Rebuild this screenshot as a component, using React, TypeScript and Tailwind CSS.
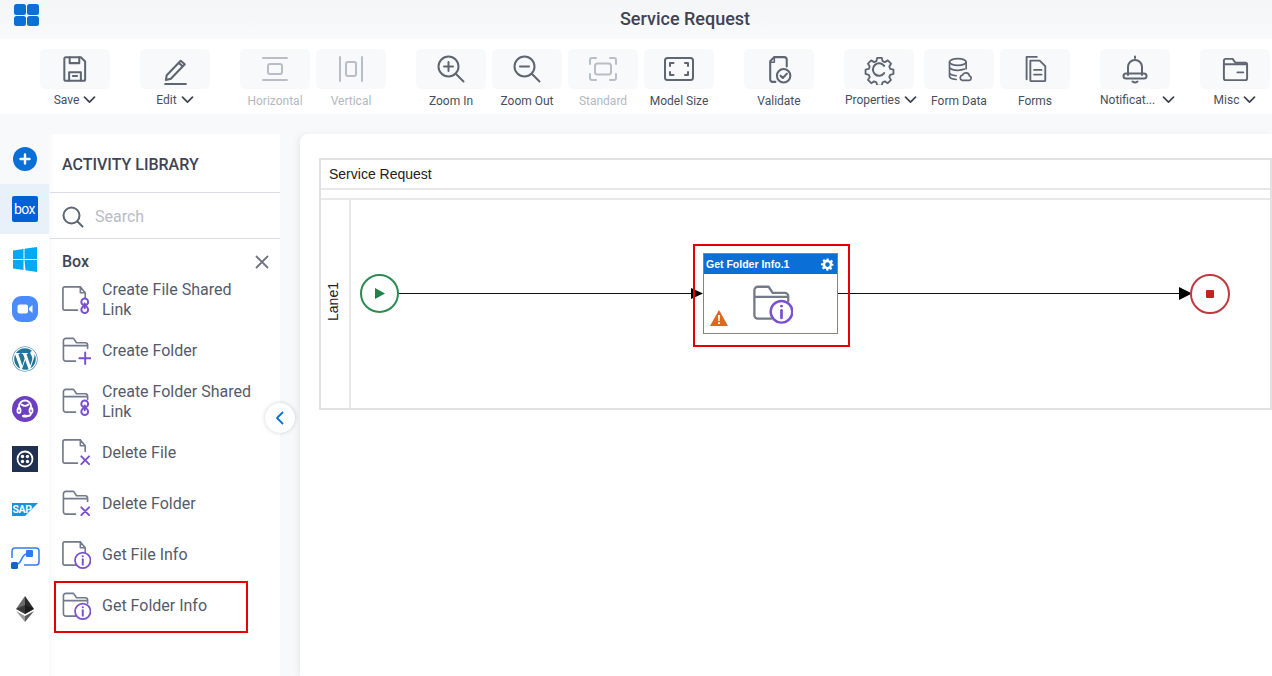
import { ReactNode } from "react";
import { FaWordpress } from "react-icons/fa";

const GREY = "#5f6673";
const SOFT = "#b9bdc6";
const PURPLE = "#7a4fd0";

function Ico({ children, size = 30, stroke = GREY, sw = 2 }: { children: ReactNode; size?: number; stroke?: string; sw?: number }) {
  return (
    <svg width={size} height={size} viewBox="0 0 30 30" fill="none" stroke={stroke} strokeWidth={sw} strokeLinecap="round" strokeLinejoin="round">
      {children}
    </svg>
  );
}

const Chevron = () => (
  <svg width="13" height="8" viewBox="0 0 13 8" fill="none" stroke="#3f4455" strokeWidth="1.700" strokeLinecap="round" strokeLinejoin="round" className="shrink-0">
    <path d="M1.500 1.200 6.500 6.200 11.500 1.200" />
  </svg>
);

const toolbarIcons: Record<string, ReactNode> = {
  save: (
    <Ico size={32} sw={1.900}>
      <path d="M6.500 4h14l4 4v16.500a1.500 1.500 0 0 1-1.500 1.500H6.500A1.500 1.500 0 0 1 5 24.500V5.500A1.500 1.500 0 0 1 6.500 4Z" />
      <path d="M10 4v5.500h9V4M9.500 26v-8h11v8M13 21.500h4" />
    </Ico>
  ),
  edit: (
    <Ico size={31}>
      <path d="M6.500 20.500 20 6.500l4 3.500-13.500 14-4.800 1.200ZM18 8.500l4 3.500" />
      <path d="M5 29h20" />
    </Ico>
  ),
  horizontal: (
    <Ico stroke={SOFT}>
      <path d="M3 4h24M3 26h24" />
      <rect x="8" y="10" width="14" height="10" rx="2" />
    </Ico>
  ),
  vertical: (
    <Ico stroke={SOFT}>
      <path d="M4 3v24M26 3v24" />
      <rect x="10" y="8" width="10" height="14" rx="2" />
    </Ico>
  ),
  zoomIn: (
    <Ico>
      <circle cx="12.500" cy="12.500" r="10" />
      <path d="m20 20 7.500 7.500M12.500 8v9M8 12.500h9" />
    </Ico>
  ),
  zoomOut: (
    <Ico>
      <circle cx="12.500" cy="12.500" r="10" />
      <path d="m20 20 7.500 7.500M8 12.500h9" />
    </Ico>
  ),
  standard: (
    <svg width="30" height="24" viewBox="0 0 30 24" fill="none" stroke={SOFT} strokeWidth="2" strokeLinecap="round" strokeLinejoin="round">
      <path d="M2 7V3a2 2 0 0 1 2-2h4M22 1h4a2 2 0 0 1 2 2v4M28 17v4a2 2 0 0 1-2 2h-4M8 23H4a2 2 0 0 1-2-2v-4" />
      <rect x="7" y="6.500" width="16" height="11" rx="2.500" />
    </svg>
  ),
  modelSize: (
    <svg width="30" height="24" viewBox="0 0 30 24" fill="none" stroke={GREY} strokeWidth="2" strokeLinecap="round" strokeLinejoin="round">
      <rect x="1" y="1" width="28" height="22" rx="2.500" />
      <path d="M6 9V6h3.500M21 6h3v3M24 15v3h-3M9.500 18H6v-3" />
    </svg>
  ),
  validate: (
    <Ico size={31}>
      <path d="M11 27H8.500A2.500 2.500 0 0 1 6 24.500V7l4-4h9.500A2.500 2.500 0 0 1 22 5.500V12" />
      <path d="M10 3v5H6" strokeWidth="1.500" />
      <circle cx="19" cy="21" r="6.500" />
      <path d="m16 21 2.200 2.200 4-4.200" />
    </Ico>
  ),
  properties: (
    <Ico size={31}>
      <path d="M12.500 2.500h5l.8 3.500 2.500 1.100 3.100-1.900 3.500 3.500-1.900 3.100 1 2.500 3.500.9v4.600l-3.500.9-1 2.500 1.900 3-3.500 3.500-3.100-1.900-2.500 1-.8 3.500h-5l-.8-3.500-2.500-1-3.100 1.900-3.500-3.500 1.900-3-1-2.500-3.500-.9v-4.600l3.500-.9 1-2.500-1.900-3.100 3.500-3.500 3.100 1.900 2.500-1.100Z" transform="translate(1.500 1.500) scale(.9)" />
      <path d="M19.500 11.500a6 6 0 1 0 0 7" />
    </Ico>
  ),
  formData: (
    <Ico size={25}>
      <ellipse cx="13" cy="6" rx="10" ry="4" />
      <path d="M3 6v17c0 2 3.500 3.500 8 4M23 6v8M3 12c0 2.200 4.500 4 10 4 3 0 6-.5 8-1.500M3 18.500c0 2 3.500 3.500 8 4" />
      <path d="M18 28h8.500a2.700 2.700 0 0 0 .5-5.300 4.500 4.500 0 0 0-8.500-1A3.300 3.300 0 0 0 18 28Z" />
    </Ico>
  ),
  forms: (
    <Ico size={28}>
      <path d="M6 26V2h11" />
      <path d="M10 6h10l6 6v15a1 1 0 0 1-1 1H11a1 1 0 0 1-1-1Z" />
      <path d="M14 16h8M14 21h8" />
    </Ico>
  ),
  bell: (
    <Ico>
      <path d="M15 4v-1.500M8 21v-8a7 7 0 0 1 14 0v8" />
      <rect x="3.500" y="19.500" width="23" height="5" rx="2.500" />
      <path d="M12.500 27.500c1.500 1.200 3.500 1.200 5 0" />
    </Ico>
  ),
  misc: (
    <Ico size={29}>
      <path d="M3 13V6a2 2 0 0 1 2-2h7l3 4h10a2 2 0 0 1 2 2v3" />
      <path d="M3 9.500h24M3 13v11a2 2 0 0 0 2 2h20a2 2 0 0 0 2-2V13M17 18h6" />
    </Ico>
  ),
};

function ToolButton({ icon, label, menu, off, shift = "" }: { icon: string; label: string; menu?: boolean; off?: boolean; shift?: string }) {
  return (
    <div className="w-[70px] flex flex-col items-center">
      <div className="w-[70px] h-[40px] rounded-[5px] bg-[#f8f9fa] flex items-center justify-center">{toolbarIcons[icon]}</div>
      <div className={`mt-[3px] h-[17px] flex items-center justify-center gap-[4px] whitespace-nowrap text-[12px] ${menu ? "-translate-y-[1px]" : ""} ${off ? "text-[#b4b8c0]" : "text-[#484e5e]"} ${shift}`}>
        <span>{label}</span>
        {menu && <Chevron />}
      </div>
    </div>
  );
}

function Toolbar() {
  return (
    <div className="h-[75px] bg-white pt-[10px] pl-[40px] flex">
      <ToolButton icon="save" label="Save" menu />
      <div className="ml-[30px]"><ToolButton icon="edit" label="Edit" menu /></div>
      <div className="ml-[30px] flex gap-[6px]">
        <ToolButton icon="horizontal" label="Horizontal" off />
        <ToolButton icon="vertical" label="Vertical" off />
      </div>
      <div className="ml-[30px] flex gap-[6px]">
        <ToolButton icon="zoomIn" label="Zoom In" />
        <ToolButton icon="zoomOut" label="Zoom Out" />
        <ToolButton icon="standard" label="Standard" off />
        <ToolButton icon="modelSize" label="Model Size" />
      </div>
      <div className="ml-[30px]"><ToolButton icon="validate" label="Validate" /></div>
      <div className="ml-[30px]"><ToolButton icon="properties" label="Properties" menu shift="translate-x-[2px]" /></div>
      <div className="ml-[10px] flex gap-[6px]">
        <ToolButton icon="formData" label="Form Data" />
        <ToolButton icon="forms" label="Forms" />
      </div>
      <div className="ml-[30px] w-[70px]">
        <div className="w-[70px] h-[40px] rounded-[5px] bg-[#f8f9fa] flex items-center justify-center">{toolbarIcons.bell}</div>
        <div className="mt-[2px] h-[17px] flex items-center gap-[7px] whitespace-nowrap text-[12px] text-[#484e5e]">
          <span>Notificat...</span>
          <Chevron />
        </div>
      </div>
      <div className="ml-[30px]"><ToolButton icon="misc" label="Misc" menu /></div>
    </div>
  );
}

/* rail logos, top to bottom */
const railTop = (
  <svg width="24" height="24" viewBox="0 0 24 24"><circle cx="12" cy="12" r="12" fill="#0a70d8" /><path d="M12 7.500v9M7.500 12h9" stroke="#fff" strokeWidth="2.400" strokeLinecap="round" /></svg>
);
const railBox = (
  <div className="w-[26px] h-[26px] rounded-[2px] bg-[#0061d5] flex items-center justify-center text-white text-[14px] leading-none tracking-[-0.6px]">box</div>
);
const rail: ReactNode[] = [
  <svg width="24" height="25" viewBox="0 0 24 25" fill="#03a9f4"><path d="M0 3.500 10.500 2v10H0ZM11.500 1.800 24 0v12H11.500ZM0 13h10.500v10L0 21.500ZM11.500 13H24v12l-11.500-1.800Z" /></svg>,
  <svg width="26" height="26" viewBox="0 0 26 26"><rect width="26" height="26" rx="9" fill="#4a8cff" /><rect x="5.500" y="8.500" width="10.500" height="9" rx="2" fill="#fff" /><path d="m17 12 3.500-3v8L17 14Z" fill="#fff" /></svg>,
  <FaWordpress size={26} color="#21759b" />,
  <svg width="26" height="26" viewBox="0 0 26 26"><circle cx="13" cy="13" r="13" fill="#6c3fc0" /><g fill="none" stroke="#fff" strokeWidth="1.800" strokeLinecap="round"><path d="M7 13v-2.500a6 6 0 0 1 12 0V13" /><rect x="5.500" y="12" width="3" height="5" rx="1.500" /><rect x="17.500" y="12" width="3" height="5" rx="1.500" /><path d="M19 17c0 2-1.500 3-3.500 3" /><path d="M9.500 8.500c2 1.500 5 1.500 7 0" /></g><ellipse cx="13" cy="20" rx="3" ry="1.500" fill="#fff" /></svg>,
  <svg width="26" height="26" viewBox="0 0 26 26"><rect width="26" height="26" fill="#1f3050" /><circle cx="13" cy="13" r="7.500" fill="none" stroke="#fff" strokeWidth="1.800" /><g fill="#fff"><circle cx="10.500" cy="10.500" r="1.700" /><circle cx="15.500" cy="10.500" r="1.700" /><circle cx="10.500" cy="15.500" r="1.700" /><circle cx="15.500" cy="15.500" r="1.700" /></g></svg>,
  <div className="relative w-[26px] h-[13px]">
    <svg width="26" height="13" viewBox="0 0 26 13" className="absolute inset-0"><path d="M0 0h26L13 13H0Z" fill="#1c8fe0" /></svg>
    <span className="absolute left-[1px] top-0 text-[10.500px] leading-[13px] font-bold text-white tracking-[-0.4px]">SAP</span>
  </div>,
  <svg width="30" height="24" viewBox="0 0 30 24" fill="none"><path d="M2 11V4a3 3 0 0 1 3-3h21a3 3 0 0 1 3 3v11a3 3 0 0 1-3 3H14" stroke="#2f7bf0" strokeWidth="1.500" /><path d="M7 17c5 0 4-10 10-10" stroke="#2f7bf0" strokeWidth="1.500" /><rect x="16" y="3" width="7" height="7" rx="1" fill="#2f7bf0" /><rect x="1" y="15" width="7" height="7" rx="1.500" fill="#1560d8" /></svg>,
  <svg width="18" height="26" viewBox="0 0 18 26"><path d="M9 0 0 13l9 5Z" fill="#6b6b6b" /><path d="M9 0l9 13-9 5Z" fill="#2a2a2a" /><path d="M0 15l9 11v-6Z" fill="#9a9a9a" /><path d="M18 15 9 26v-6Z" fill="#5c5c5c" /><path d="M0 13l9-4 9 4-9 5Z" fill="#111" opacity=".55" /></svg>,
];

function Rail() {
  return (
    <div className="w-[49px] mr-[1px] shrink-0 flex flex-col">
      <div className="h-[50px] flex items-center justify-center">{railTop}</div>
      <div className="h-[50px] bg-[#e8f1fa] flex items-center justify-center">{railBox}</div>
      <div className="flex-1 bg-white">
        {rail.map((logo, i) => (
          <div key={i} className="h-[50px] flex items-center justify-center">{logo}</div>
        ))}
      </div>
    </div>
  );
}

/* library icons: a grey file or folder with a purple badge */
const FileBase = () => <path d="M20 3H4a2 2 0 0 0-2 2v20a2 2 0 0 0 2 2h13M20 3l5 6M20 3v6h5M25 9v6" stroke="#727a8c" />;
const FolderBase = () => <path d="M15 27H5a2.500 2.500 0 0 1-2.500-2.500V6A2.500 2.500 0 0 1 5 3.500h8l3 4.500h9a2.500 2.500 0 0 1 2.500 2.500V14M2.500 11h25" stroke="#727a8c" />;
const badges: Record<string, ReactNode> = {
  link: (
    <g stroke={PURPLE} strokeWidth="2">
      <rect x="21" y="15" width="7" height="7" rx="3.500" />
      <rect x="21" y="23" width="7" height="7" rx="3.500" />
      <path d="M24.500 20v5" />
    </g>
  ),
  plus: <path d="M25 18v12M19 24h12" stroke={PURPLE} strokeWidth="2" />,
  x: <path d="m21 20 8 8M29 20l-8 8" stroke={PURPLE} strokeWidth="2" />,
  info: (
    <g stroke={PURPLE}>
      <circle cx="22.500" cy="22" r="8" fill="#fff" strokeWidth="1.800" />
      <path d="M22.500 21v5.500" strokeWidth="2" />
      <circle cx="22.500" cy="17.800" r=".5" fill={PURPLE} strokeWidth="1.200" />
    </g>
  ),
};

function LibIcon({ kind, badge, size = 30 }: { kind: "file" | "folder"; badge: string; size?: number }) {
  return (
    <svg width={size} height={size} viewBox="0 0 31 31" fill="none" strokeWidth="1.700" strokeLinecap="round" strokeLinejoin="round">
      {kind === "file" ? <FileBase /> : <FolderBase />}
      {badges[badge]}
    </svg>
  );
}

const activities: { label: ReactNode; kind: "file" | "folder"; badge: string }[] = [
  { label: <>Create File Shared<br />Link</>, kind: "file", badge: "link" },
  { label: "Create Folder", kind: "folder", badge: "plus" },
  { label: <>Create Folder Shared<br />Link</>, kind: "folder", badge: "link" },
  { label: "Delete File", kind: "file", badge: "x" },
  { label: "Delete Folder", kind: "folder", badge: "x" },
  { label: "Get File Info", kind: "file", badge: "info" },
  { label: "Get Folder Info", kind: "folder", badge: "info" },
];

function Library() {
  return (
    <div className="relative w-[230px] shrink-0 bg-white flex flex-col shadow-[inset_4px_0_4px_-3px_rgba(0,0,0,0.03)]">
      <div className="h-[59px] pl-[12px] pt-[21px] border-b border-[#dcdde6] text-[16px] leading-[20px] font-medium text-[#3f4455]">ACTIVITY LIBRARY</div>
      <div className="h-[46px] pl-[12px] pt-[3px] border-b border-[#dcdde6] flex items-center gap-[11px]">
        <svg width="22" height="22" viewBox="0 0 22 22" fill="none" stroke={GREY} strokeWidth="2" strokeLinecap="round"><circle cx="9.500" cy="9.500" r="8" /><path d="m15.500 15.500 5 5" /></svg>
        <span className="text-[16px] text-[#b9bcc6]">Search</span>
      </div>
      <div className="h-[34px] pl-[12px] pr-[11px] pt-[12px] flex items-center justify-between">
        <span className="text-[16px] font-medium text-[#3f4455]">Box</span>
        <svg width="14" height="14" viewBox="0 0 14 14" stroke="#6f7480" strokeWidth="1.800" strokeLinecap="round"><path d="m1.500 1.500 11 11M12.500 1.500l-11 11" /></svg>
      </div>
      <div className="flex flex-col pt-[1px]">
        {activities.map((a, i) => (
          <div key={i} className="h-[51px] pl-[11px] flex items-center gap-[11px] shrink-0">
            <span className="-mt-[2px]"><LibIcon kind={a.kind} badge={a.badge} /></span>
            <div className="text-[16px] leading-[20px] text-[#555b6b]">{a.label}</div>
          </div>
        ))}
      </div>
      {/* annotation round the last item */}
      <div className="absolute left-[4px] top-[447px] w-[194px] h-[52px] border-2 border-[#e60000]" />
      <div className="absolute left-[215px] top-[269px] w-[30px] h-[30px] rounded-full bg-white shadow-[0_0_4px_rgba(0,0,0,0.18)] flex items-center justify-center z-10">
        <svg width="10" height="14" viewBox="0 0 10 14" fill="none" stroke="#0a70d8" strokeWidth="1.800" strokeLinecap="round" strokeLinejoin="round"><path d="M7.500 1.500 2 7l5.500 5.500" /></svg>
      </div>
    </div>
  );
}

function Diagram() {
  return (
    <div className="relative flex-1 ml-[20px] bg-white rounded-tl-[8px] shadow-[-3px_0_6px_rgba(0,0,0,0.05)] pt-[24px] pl-[19px] font-['Liberation_Sans',sans-serif]">
      <div className="w-[953px] h-[252px] border-2 border-[#e2e2e2] flex flex-col text-[14px] text-[#222]">
        <div className="h-[30px] pl-[8px] flex items-center border-b-2 border-[#e8e8e8]">Service Request</div>
        <div className="h-[10px] border-b-2 border-[#e8e8e8]" />
        <div className="flex-1 flex">
          <div className="w-[30px] border-r-2 border-[#e8e8e8] flex items-center justify-center">
            <span className="-rotate-90 whitespace-nowrap relative -left-[2px] -top-[3px]">Lane1</span>
          </div>
        </div>
      </div>

      {/* connectors */}
      <svg width="972" height="300" className="absolute left-0 top-0" fill="none">
        <path d="M99 159.500H392M538 159.500H882" stroke="#111" strokeWidth="1.200" />
        <path d="M391 154v11l12-5.500Z" fill="#000" />
        <path d="M879 153v13l13-6.500Z" fill="#000" />
      </svg>

      {/* start */}
      <div className="absolute left-[60px] top-[140px] w-[39px] h-[39px] rounded-full border-2 border-[#2c8a52] flex items-center justify-center">
        <svg width="10" height="11" viewBox="0 0 10 11"><path d="M0 0v11l10-5.500Z" fill="#20804a" /></svg>
      </div>

      {/* end */}
      <div className="absolute left-[890px] top-[140px] w-[40px] h-[40px] rounded-full border-[2.500px] border-[#c0393f] flex items-center justify-center">
        <div className="w-[8px] h-[8px] bg-[#cc1f1f] rounded-[1px]" />
      </div>

      {/* task */}
      <div className="absolute left-[403px] top-[119px] w-[135px] h-[81px] border border-[#85857c] bg-white">
        <div className="h-[20px] bg-[#0a70d8] flex items-center justify-between pl-[2px] pr-[3px]">
          <span className="text-[10.500px] font-bold text-white whitespace-nowrap relative top-[1px]">Get Folder Info.1</span>
          <svg width="13" height="13" viewBox="0 0 24 24" fill="#fff"><path fillRule="evenodd" d="M10 1h4l.6 3.200 2.200.9 2.700-1.900 2.800 2.800-1.900 2.700.9 2.200L23 10.500v3.500l-3.200.6-.9 2.200 1.900 2.700-2.800 2.800-2.700-1.900-2.200.9L14 23.500h-4l-.6-3.200-2.200-.9-2.700 1.900-2.800-2.800 1.900-2.700-.9-2.200L0 13.500v-3.500l3.700-.6.900-2.200L2.700 4.500l2.800-2.800 2.700 1.900 2.200-.9ZM12 8a4.200 4.200 0 1 0 0 8.400A4.200 4.200 0 0 0 12 8Z" /></svg>
        </div>
        <div className="absolute left-[47px] top-[28px]">
          <LibIcon kind="folder" badge="info" size={42} />
        </div>
        <svg width="18" height="16" viewBox="0 0 18 16" className="absolute left-[6px] top-[56px]">
          <path d="M9 0 18 16H0Z" fill="#e0661c" />
          <path d="M8 5h2l-.3 6H8.300ZM8 12.200h2V14H8Z" fill="#fff" />
        </svg>
      </div>

      {/* annotation round the task */}
      <div className="absolute left-[393px] top-[110px] w-[157px] h-[103px] border-2 border-[#e60000]" />
    </div>
  );
}

export default function App() {
  return (
    <div className="relative w-[1272px] h-[676px] overflow-hidden bg-[#f8f9fb] font-['Roboto',sans-serif]">
      <div className="relative h-[39px] bg-gradient-to-b from-[#f4f5f7] to-[#f9fafb] flex items-center justify-center">
        <div className="absolute left-[14px] top-[4px] grid grid-cols-2 gap-[1px]">
          <div className="w-[12px] h-[10.500px] rounded-[2.500px] bg-[#0a70d8]" />
          <div className="w-[12px] h-[10.500px] rounded-[2.500px] bg-[#0a70d8]" />
          <div className="w-[12px] h-[10.500px] rounded-[2.500px] bg-[#0a70d8]" />
          <div className="w-[12px] h-[10.500px] rounded-[2.500px] bg-[#0a70d8]" />
        </div>
        <span className="text-[18px] font-medium text-[#3f4455] relative left-[49px] -top-[1px]">Service Request</span>
      </div>
      <Toolbar />
      <div className="flex h-[562px] pt-[20px]">
        <Rail />
        <Library />
        <Diagram />
      </div>
    </div>
  );
}
